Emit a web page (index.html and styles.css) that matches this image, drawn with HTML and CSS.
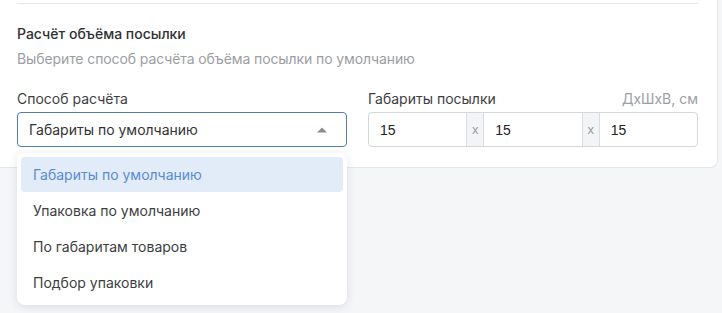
FILE: index.html
```html
<!DOCTYPE html>
<html lang="ru">
<head>
<meta charset="utf-8">
<link rel="stylesheet" href="styles.css">
</head>
<body>
<div class="page">
<div class="card">
  <div class="divider"></div>
  <div class="title">Расчёт объёма посылки</div>
  <div class="subtitle">Выберите способ расчёта объёма посылки по умолчанию</div>
  <div class="row">
    <div class="col">
      <div class="label">Способ расчёта</div>
      <div class="select">
        <span class="select-value">Габариты по умолчанию</span>
        <svg class="arrow" width="10" height="6" viewBox="0 0 10 6"><path d="M0 5.5 L5 0.5 L10 5.5 Z" fill="#8a8d91"/></svg>
        <div class="menu">
          <div class="item active">Габариты по умолчанию</div>
          <div class="item">Упаковка по умолчанию</div>
          <div class="item">По габаритам товаров</div>
          <div class="item">Подбор упаковки</div>
        </div>
      </div>
    </div>
    <div class="col">
      <div class="label label-split"><span>Габариты посылки</span><span class="units">ДхШхВ, см</span></div>
      <div class="dims">
        <div class="dim">15</div>
        <div class="sep">x</div>
        <div class="dim">15</div>
        <div class="sep">x</div>
        <div class="dim">15</div>
      </div>
    </div>
  </div>
</div>
</div>
</body>
</html>
```
FILE: styles.css
```css
html, body {
  margin: 0;
  padding: 0;
  background: #f5f6f8;
  font-family: Inter, "Noto Sans", sans-serif;
  color: #333;
}
.page {
  min-height: 313px;
}
.card {
  width: 681px;
  background: #fff;
  border-right: 1px solid #e4e6ea;
  border-bottom: 1px solid #e4e6ea;
  border-bottom-right-radius: 8px;
  padding: 3px 19px 20px 17px;
}
.divider {
  border-top: 1px solid #e6e8eb;
}
.title {
  margin-top: 20px;
  font-size: 14px;
  line-height: 20px;
  color: #2f3133;
  font-weight: 500;
}
.subtitle {
  margin-top: 5px;
  font-size: 14px;
  line-height: 20px;
  color: #9b9ea3;
  letter-spacing: -0.1px;
}
.row {
  display: flex;
  gap: 21px;
  margin-top: 20px;
}
.col {
  flex: 1;
  display: flex;
  flex-direction: column;
  gap: 3px;
}
.label {
  font-size: 14px;
  line-height: 20px;
  color: #3c3e41;
}
.label-split {
  display: flex;
  justify-content: space-between;
}
.units {
  color: #9b9ea3;
}
.select {
  position: relative;
  height: 35px;
  box-sizing: border-box;
  border: 1px solid #4f7db8;
  border-radius: 4px;
  display: flex;
  align-items: center;
  justify-content: space-between;
  padding: 0 19px 0 11px;
  font-size: 14px;
  color: #333;
}
.arrow {
  display: block;
}
.menu {
  position: absolute;
  z-index: 5;
  left: -1px;
  right: -1px;
  top: 40px;
  background: #fff;
  border-radius: 8px;
  box-shadow: 0 2px 10px rgba(30, 40, 60, 0.12);
  padding: 4px;
  display: flex;
  flex-direction: column;
}
.item {
  height: 36px;
  line-height: 36px;
  padding: 0 12px;
  font-size: 14px;
  color: #3c3e41;
  border-radius: 4px;
}
.item.active {
  background: #e2ebf8;
  color: #5a8bd2;
  height: 35px;
  line-height: 35px;
  margin-bottom: 1px;
}
.dims {
  height: 35px;
  box-sizing: border-box;
  border: 1px solid #d4d7dc;
  border-radius: 4px;
  display: flex;
  font-family: "Liberation Sans", Arial, sans-serif;
  font-size: 14px;
  overflow: hidden;
}
.dim {
  flex: 1;
  display: flex;
  align-items: center;
  padding-left: 11px;
  color: #222;
}
.sep {
  width: 16px;
  background: #f3f4f6;
  border-left: 1px solid #d9dce0;
  border-right: 1px solid #d9dce0;
  display: flex;
  align-items: center;
  justify-content: center;
  color: #9a9da2;
  font-size: 13px;
}
```
